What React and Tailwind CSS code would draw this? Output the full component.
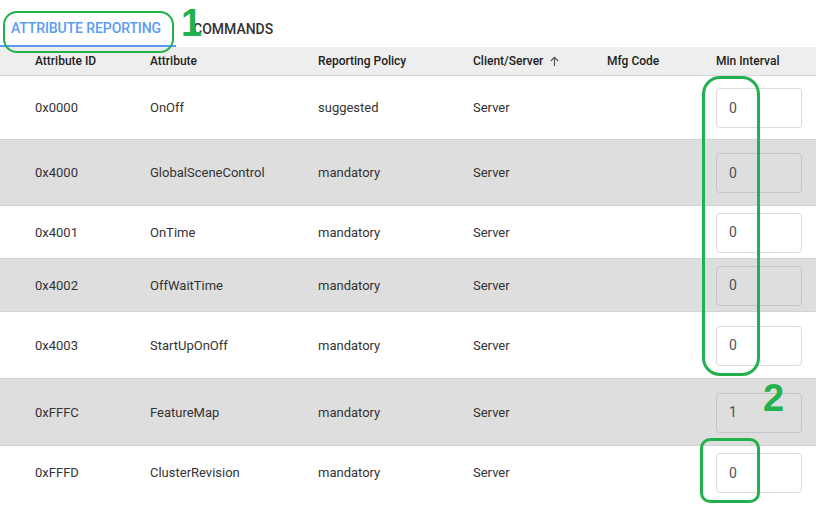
import React from "react";

const rows = [
  { id: "0x0000", name: "OnOff", policy: "suggested", side: "Server", h: "h-[64px]", gray: false, val: "0" },
  { id: "0x4000", name: "GlobalSceneControl", policy: "mandatory", side: "Server", h: "h-[66px]", gray: true, val: "0" },
  { id: "0x4001", name: "OnTime", policy: "mandatory", side: "Server", h: "h-[53px]", gray: false, val: "0" },
  { id: "0x4002", name: "OffWaitTime", policy: "mandatory", side: "Server", h: "h-[53px]", gray: true, val: "0" },
  { id: "0x4003", name: "StartUpOnOff", policy: "mandatory", side: "Server", h: "h-[67px]", gray: false, val: "0" },
  { id: "0xFFFC", name: "FeatureMap", policy: "mandatory", side: "Server", h: "h-[67px]", gray: true, val: "1" },
  { id: "0xFFFD", name: "ClusterRevision", policy: "mandatory", side: "Server", h: "h-[53px]", gray: false, val: "0", last: true },
];

function Cols({ a, b, c, d, e, f, cls }) {
  return (
    <>
      <div className={`w-[115px] shrink-0 ${cls}`}>{a}</div>
      <div className={`w-[168px] shrink-0 ${cls}`}>{b}</div>
      <div className={`w-[155px] shrink-0 ${cls}`}>{c}</div>
      <div className={`w-[134px] shrink-0 ${cls}`}>{d}</div>
      <div className={`w-[109px] shrink-0 ${cls}`}>{e}</div>
      <div className={`flex-1 ${cls}`}>{f}</div>
    </>
  );
}

export default function App() {
  return (
    <div className="relative w-[816px] h-[519px] overflow-hidden bg-white font-['Roboto',sans-serif] text-[#333]">
      {/* tabs */}
      <div className="flex h-[47px] items-stretch">
        <div className="flex w-[176px] items-center justify-center border-b-2 border-[#5a9cf5] pt-[11px] pr-[4px] text-[14px] font-medium uppercase tracking-[-0.1px] text-[#5a9cf5]">
          Attribute Reporting
        </div>
        <div className="flex items-center pl-[17px] pt-[12px] text-[14px] font-medium uppercase text-[#333]">
          Commands
        </div>
      </div>

      {/* header */}
      <div className="flex h-[29px] items-center border-b border-[#d6d6d6] bg-[#eeeeee] pl-[35px] text-[12px] font-medium text-[#222]">
        <Cols
          a="Attribute ID"
          b="Attribute"
          c="Reporting Policy"
          d={
            <span className="flex items-center gap-[6px]">
              Client/Server
              <svg width="11" height="11" viewBox="0 0 12 12" fill="none" stroke="#555" strokeWidth="1.3">
                <path d="M6 11V1.5M2 5.5l4-4 4 4" />
              </svg>
            </span>
          }
          e="Mfg Code"
          f="Min Interval"
        />
      </div>

      {/* rows */}
      {rows.map((r) => (
        <div
          key={r.id}
          className={`flex items-center pl-[35px] pt-[1px] text-[13px] ${r.h} ${r.last ? "" : "border-b border-[#d3d3d3]"} ${r.gray ? "bg-[#dedede]" : "bg-white"}`}
        >
          <Cols
            a={r.id}
            b={r.name}
            c={r.policy}
            d={r.side}
            e=""
            f={
              <div
                className={`flex h-[40px] w-[86px] items-center rounded-[4px] border pl-[12px] text-[14px] text-[#4a5160] ${
                  r.gray ? "border-[#c4c4c4] bg-[#dedede]" : "border-[#dadada] bg-white"
                }`}
              >
                {r.val}
              </div>
            }
          />
        </div>
      ))}

      {/* annotations (hand-drawn highlights over the screenshot) */}
      <div className="absolute left-[3px] top-[11px] h-[42px] w-[171px] rounded-[14px] border-2 border-[#22b14c]" />
      <div className="absolute left-[181px] top-[0px] text-[38px] font-bold leading-[46px] text-[#22b14c] font-['Liberation_Sans',sans-serif]">1</div>
      <div className="absolute left-[702px] top-[76px] h-[300px] w-[58px] rounded-[18px] border-[3px] border-[#22b14c]" />
      <div className="absolute left-[763px] top-[375px] text-[38px] font-bold leading-[46px] text-[#22b14c] font-['Liberation_Sans',sans-serif]">2</div>
      <div className="absolute left-[700px] top-[438px] h-[65px] w-[60px] rounded-[10px] border-[3px] border-[#22b14c]" />
    </div>
  );
}
